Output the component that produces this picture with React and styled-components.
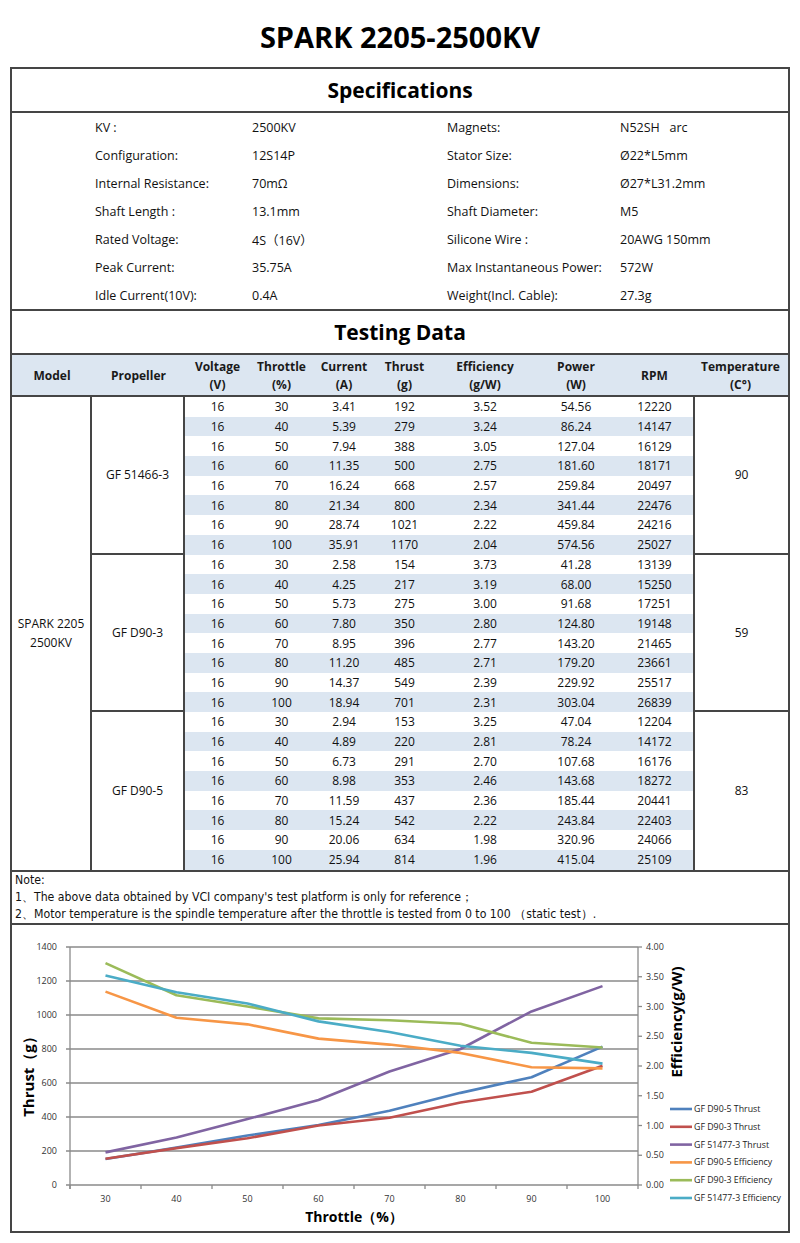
import React from 'react';
import styled, { createGlobalStyle } from 'styled-components';

const GlobalStyle = createGlobalStyle`
  body {
    margin: 0;
    background: #fff;
    font-family: "Open Sans", "Noto Sans", "Noto Sans CJK SC", sans-serif;
    color: #111;
  }
`;

const LINE = '#454545';
const STRIPE = '#dce6f1';

const Page = styled.div`
  width: 800px;
  padding-bottom: 10px;
`;

const Title = styled.h1`
  margin: 0;
  height: 67px;
  display: flex;
  align-items: center;
  justify-content: center;
  font-size: 29px;
  font-weight: 700;
  letter-spacing: 0;
  color: #000;
  padding-top: 6px;
  box-sizing: border-box;
`;

const Sheet = styled.div`
  margin: 0 10px;
  border: 2px solid ${LINE};
`;

const SectionTitle = styled.div`
  height: 42px;
  display: flex;
  align-items: center;
  justify-content: center;
  font-size: 21px;
  font-weight: 700;
  color: #000;
  border-bottom: 2px solid ${LINE};
`;

const SpecGrid = styled.div`
  display: grid;
  grid-template-columns: 157px 195px 173px 1fr;
  grid-auto-rows: 28px;
  padding-left: 83px;
  border-bottom: 2px solid ${LINE};
`;

const SpecCell = styled.div`
  display: flex;
  align-items: center;
  font-size: 12.5px;
  color: #111;
  white-space: nowrap;
`;

const COLS = '80px 93px 65px 63px 62px 59px 102px 80px 77px 95px';

const HeadRow = styled.div`
  display: grid;
  grid-template-columns: ${COLS};
  height: 40px;
  background: ${STRIPE};
  border-bottom: 2px solid ${LINE};
`;

const HeadCell = styled.div`
  display: flex;
  align-items: center;
  justify-content: center;
  text-align: center;
  font-size: 12px;
  font-weight: 700;
  line-height: 18px;
  padding-top: 2px;
  color: #1a1a1a;
`;

const Body = styled.div`
  display: flex;
  border-bottom: 2px solid ${LINE};
`;

const ModelCell = styled.div`
  width: 80px;
  box-sizing: border-box;
  border-right: 2px solid ${LINE};
  display: flex;
  align-items: center;
  justify-content: center;
  text-align: center;
  font-size: 12px;
  line-height: 19px;
`;

const Groups = styled.div`
  flex: 1;
  display: flex;
  flex-direction: column;
`;

const Group = styled.div`
  display: grid;
  grid-template-columns: 93px 508px 95px;
`;

const SideCell = styled.div`
  box-sizing: border-box;
  display: flex;
  align-items: center;
  justify-content: center;
  font-size: 12px;
  border-bottom: ${p => (p.$last ? 'none' : `2px solid ${LINE}`)};
  border-right: ${p => (p.$right ? `2px solid ${LINE}` : 'none')};
  border-left: ${p => (p.$left ? `2px solid ${LINE}` : 'none')};
`;

const Rows = styled.div`
  display: flex;
  flex-direction: column;
`;

const DataRow = styled.div`
  display: grid;
  grid-template-columns: 65px 63px 62px 59px 102px 80px 77px;
  height: 19.7px;
  background: ${p => (p.$odd ? STRIPE : '#fff')};
`;

const DataCell = styled.div`
  display: flex;
  align-items: center;
  justify-content: center;
  font-size: 12px;
  color: #111;
`;

const Notes = styled.div`
  padding: 0 3px;
  border-bottom: 2px solid ${LINE};
`;

const NoteLine = styled.div`
  height: 17px;
  line-height: 17px;
  font-family: "Liberation Sans Narrow", "DejaVu Sans Condensed", "Liberation Sans", sans-serif;
  font-size: 12.2px;
  color: #111;
  white-space: nowrap;
`;

const ChartBox = styled.div`
  height: 306px;
`;

const groups = [
  {
    prop: 'GF 51466-3',
    temp: '90',
    rows: [
      ['16', '30', '3.41', '192', '3.52', '54.56', '12220'],
      ['16', '40', '5.39', '279', '3.24', '86.24', '14147'],
      ['16', '50', '7.94', '388', '3.05', '127.04', '16129'],
      ['16', '60', '11.35', '500', '2.75', '181.60', '18171'],
      ['16', '70', '16.24', '668', '2.57', '259.84', '20497'],
      ['16', '80', '21.34', '800', '2.34', '341.44', '22476'],
      ['16', '90', '28.74', '1021', '2.22', '459.84', '24216'],
      ['16', '100', '35.91', '1170', '2.04', '574.56', '25027'],
    ],
  },
  {
    prop: 'GF D90-3',
    temp: '59',
    rows: [
      ['16', '30', '2.58', '154', '3.73', '41.28', '13139'],
      ['16', '40', '4.25', '217', '3.19', '68.00', '15250'],
      ['16', '50', '5.73', '275', '3.00', '91.68', '17251'],
      ['16', '60', '7.80', '350', '2.80', '124.80', '19148'],
      ['16', '70', '8.95', '396', '2.77', '143.20', '21465'],
      ['16', '80', '11.20', '485', '2.71', '179.20', '23661'],
      ['16', '90', '14.37', '549', '2.39', '229.92', '25517'],
      ['16', '100', '18.94', '701', '2.31', '303.04', '26839'],
    ],
  },
  {
    prop: 'GF D90-5',
    temp: '83',
    rows: [
      ['16', '30', '2.94', '153', '3.25', '47.04', '12204'],
      ['16', '40', '4.89', '220', '2.81', '78.24', '14172'],
      ['16', '50', '6.73', '291', '2.70', '107.68', '16176'],
      ['16', '60', '8.98', '353', '2.46', '143.68', '18272'],
      ['16', '70', '11.59', '437', '2.36', '185.44', '20441'],
      ['16', '80', '15.24', '542', '2.22', '243.84', '22403'],
      ['16', '90', '20.06', '634', '1.98', '320.96', '24066'],
      ['16', '100', '25.94', '814', '1.96', '415.04', '25109'],
    ],
  },
];

const specs = [
  ['KV :', '2500KV', 'Magnets:', 'N52SH\u00a0\u00a0\u00a0arc'],
  ['Configuration:', '12S14P', 'Stator Size:', 'Ø22*L5mm'],
  ['Internal Resistance:', '70mΩ', 'Dimensions:', 'Ø27*L31.2mm'],
  ['Shaft Length :', '13.1mm', 'Shaft Diameter:', 'M5'],
  ['Rated Voltage:', '4S（16V）', 'Silicone Wire :', '20AWG 150mm'],
  ['Peak Current:', '35.75A', 'Max Instantaneous Power:', '572W'],
  ['Idle Current(10V):', '0.4A', 'Weight(Incl. Cable):', '27.3g'],
];

const headers = [
  ['Model'], ['Propeller'], ['Voltage', '(V)'], ['Throttle', '(%)'], ['Current', '(A)'],
  ['Thrust', '(g)'], ['Efficiency', '(g/W)'], ['Power', '(W)'], ['RPM'], ['Temperature', '(C°)'],
];

// chart geometry (svg coords)
const L = 58, R = 626, T = 22, B = 260;
const STEP = (R - L) / 8;
const cx = i => L + STEP * (i + 0.5);
const yL = v => B - (v / 1400) * (B - T);
const yR = v => B - (v / 4) * (B - T);

const series = [
  { name: 'GF D90-5 Thrust', color: '#4f81bd', g: 2, col: 3, axis: yL },
  { name: 'GF D90-3 Thrust', color: '#c0504d', g: 1, col: 3, axis: yL },
  { name: 'GF 51477-3 Thrust', color: '#8064a2', g: 0, col: 3, axis: yL },
  { name: 'GF D90-5 Efficiency', color: '#f79646', g: 2, col: 4, axis: yR },
  { name: 'GF D90-3 Efficiency', color: '#9bbb59', g: 1, col: 4, axis: yR },
  { name: 'GF 51477-3 Efficiency', color: '#4bacc6', g: 0, col: 4, axis: yR },
];

const Chart = () => {
  const leftTicks = [0, 200, 400, 600, 800, 1000, 1200, 1400];
  const rightTicks = [0, 0.5, 1, 1.5, 2, 2.5, 3, 3.5, 4];
  const xs = [30, 40, 50, 60, 70, 80, 90, 100];
  const font = '"Open Sans", "Noto Sans", sans-serif';
  return (
    <svg width="776" height="306" viewBox="0 0 776 306" fontFamily={font}>
      {leftTicks.map(v => (
        <g key={v}>
          <line x1={L - 4} x2={R} y1={yL(v)} y2={yL(v)} stroke="#8a8a8a" strokeWidth="1.3" />
          <text x={L - 13} y={yL(v) + 3} fontSize="9" textAnchor="end" fill="#333">{v}</text>
        </g>
      ))}
      <line x1={L} x2={L} y1={T} y2={B + 4} stroke="#8a8a8a" strokeWidth="1.3" />
      <line x1={R} x2={R} y1={T} y2={B} stroke="#8a8a8a" strokeWidth="1.3" />
      {rightTicks.map(v => (
        <g key={v}>
          <line x1={R} x2={R + 4} y1={yR(v)} y2={yR(v)} stroke="#8a8a8a" strokeWidth="1.3" />
          <text x={R + 8} y={yR(v) + 3} fontSize="9" fill="#333">{v.toFixed(2)}</text>
        </g>
      ))}
      {Array.from({ length: 9 }, (_, i) => (
        <line key={i} x1={L + STEP * i} x2={L + STEP * i} y1={B} y2={B + 4} stroke="#8a8a8a" strokeWidth="1.3" />
      ))}
      {xs.map((v, i) => (
        <text key={v} x={cx(i)} y={B + 17} fontSize="9" textAnchor="middle" fill="#333">{v}</text>
      ))}
      {series.map(s => (
        <polyline
          key={s.name}
          fill="none"
          stroke={s.color}
          strokeWidth="2.6"
          strokeLinejoin="round"
          points={groups[s.g].rows.map((r, i) => `${cx(i)},${s.axis(parseFloat(r[s.col]))}`).join(' ')}
        />
      ))}
      <text x="22" y="148" fontSize="15" fontWeight="700" textAnchor="middle" fill="#000" transform="rotate(-90 22 148)">
        Thrust（g）
      </text>
      <text x="670" y="97" fontSize="15" fontWeight="700" textAnchor="middle" fill="#000" transform="rotate(-90 670 97)">
        Efficiency(g/W)
      </text>
      <text x="342" y="297" fontSize="14" fontWeight="700" textAnchor="middle" fill="#000">Throttle（%）</text>
      {series.map((s, k) => {
        const y = 184 + k * 17.8;
        return (
          <g key={s.name}>
            <line x1="658" x2="680" y1={y} y2={y} stroke={s.color} strokeWidth="2.6" />
            <text x="682" y={y + 3} fontSize="8.8" fill="#222">{s.name}</text>
          </g>
        );
      })}
    </svg>
  );
};

const App = () => (
  <Page>
    <GlobalStyle />
    <Title>SPARK 2205-2500KV</Title>
    <Sheet>
      <SectionTitle>Specifications</SectionTitle>
      <SpecGrid>
        {specs.map(row => row.map((t, i) => <SpecCell key={row[0] + i}>{t}</SpecCell>))}
      </SpecGrid>
      <SectionTitle>Testing Data</SectionTitle>
      <HeadRow>
        {headers.map(h => (
          <HeadCell key={h[0]}>
            {h.length > 1 ? <span>{h[0]}<br />{h[1]}</span> : h[0]}
          </HeadCell>
        ))}
      </HeadRow>
      <Body>
        <ModelCell>SPARK 2205<br />2500KV</ModelCell>
        <Groups>
          {groups.map((g, gi) => (
            <Group key={g.prop}>
              <SideCell $right $last={gi === groups.length - 1}>{g.prop}</SideCell>
              <Rows>
                {g.rows.map((r, ri) => (
                  <DataRow key={ri} $odd={ri % 2 === 1}>
                    {r.map((v, ci) => <DataCell key={ci}>{v}</DataCell>)}
                  </DataRow>
                ))}
              </Rows>
              <SideCell $left $last={gi === groups.length - 1}>{g.temp}</SideCell>
            </Group>
          ))}
        </Groups>
      </Body>
      <Notes>
        <NoteLine>Note:</NoteLine>
        <NoteLine>1、The above data obtained by VCI company's test platform is only for reference；</NoteLine>
        <NoteLine>2、Motor temperature is the spindle temperature after the throttle is tested from 0 to 100 （static test）.</NoteLine>
      </Notes>
      <ChartBox>
        <Chart />
      </ChartBox>
    </Sheet>
  </Page>
);

export default App;
